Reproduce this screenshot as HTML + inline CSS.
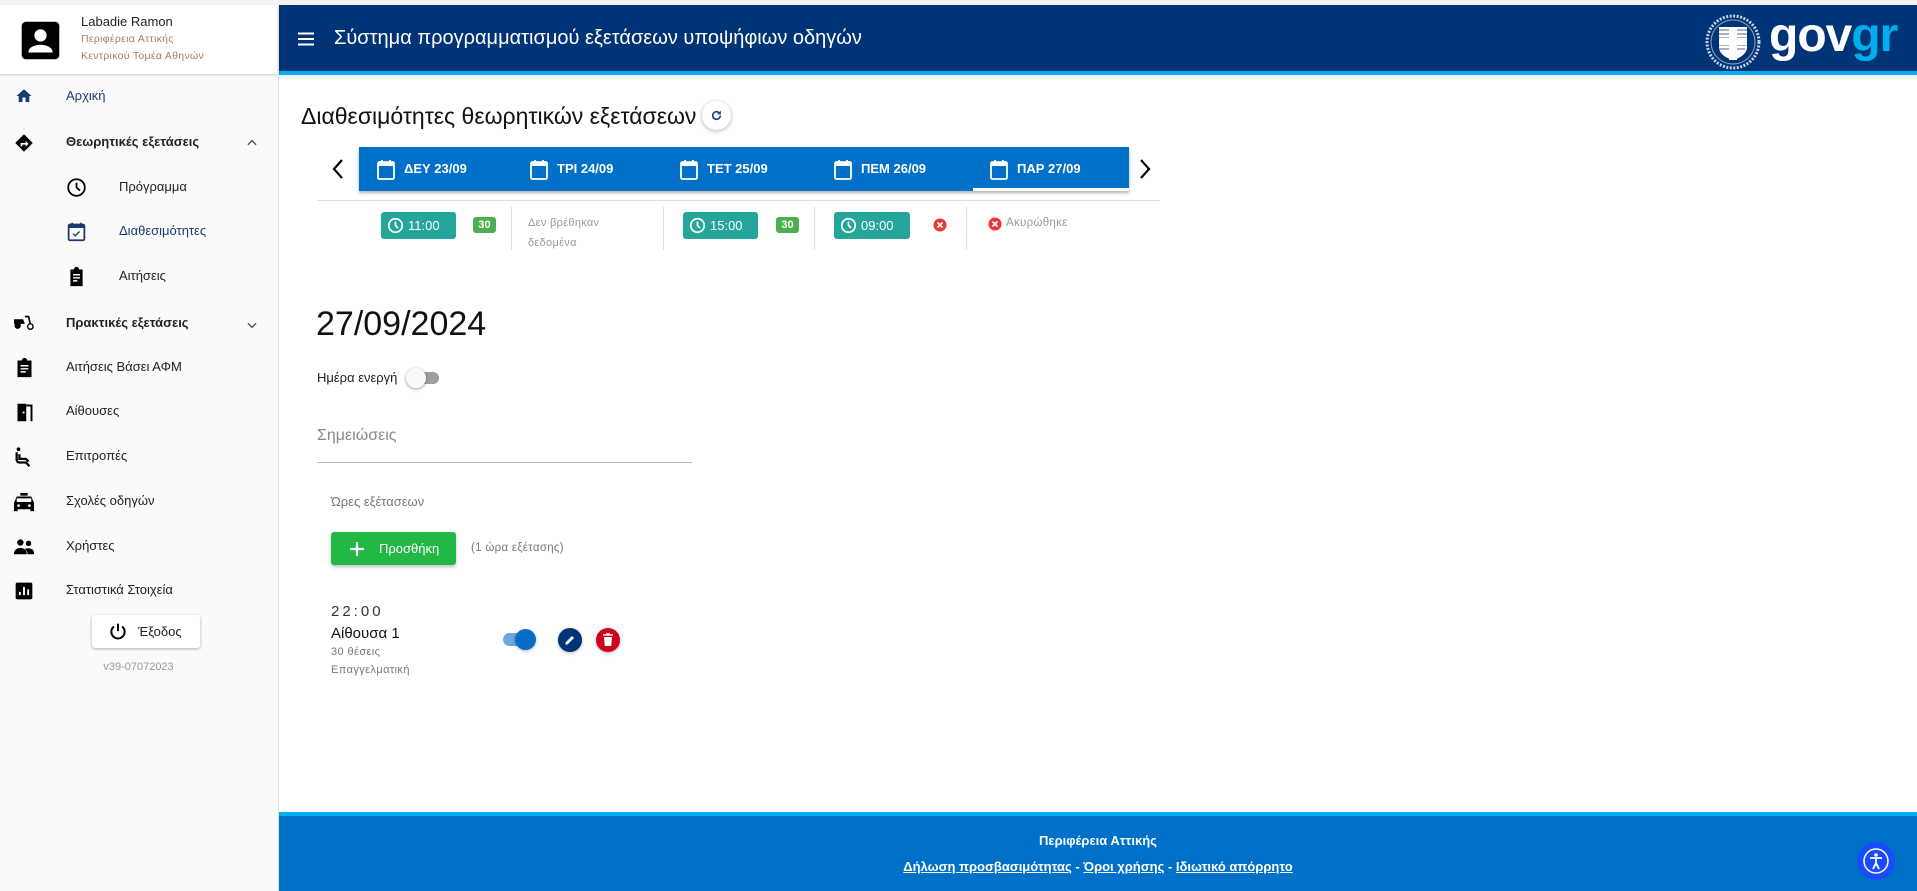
<!DOCTYPE html>
<html><head><meta charset="utf-8"><style>
*{box-sizing:border-box;margin:0;padding:0}
body{width:1917px;height:891px;overflow:hidden;background:#f3f3f4;font-family:"Liberation Sans",sans-serif;position:relative;color:#222}
.abs{position:absolute}
#side{position:absolute;left:0;top:5px;width:279px;height:886px;background:#fafafa;border-right:1px solid #e2e2e2}
#prof{position:absolute;left:0;top:0;width:277px;height:69px;background:#fff;box-shadow:0 1px 2px rgba(0,0,0,.2)}
.it{position:absolute;left:66px;font-size:13px;color:#222}
.ic{position:absolute}
#hdr{position:absolute;left:279px;top:5px;width:1638px;height:70px;background:#003476;border-bottom:4px solid #00aeef}
#main{position:absolute;left:279px;top:79px;width:1638px;height:733px;background:#fff}
#foot{position:absolute;left:279px;top:812px;width:1638px;height:79px;background:#0070c8;border-top:4px solid #00aeef;color:#fff;text-align:center}
.tab{position:absolute;top:0;height:44px;color:#fff;font-size:13px;font-weight:bold;line-height:44px}
.tab svg{position:absolute;left:0;top:12px}
.tab span{position:absolute;left:28px;white-space:nowrap}
.chip{position:absolute;top:212px;height:27px;background:#26a69a;border-radius:3px;color:#fff;font-size:13px;line-height:27px;padding-left:27px}
.chip svg{position:absolute;left:6px;top:5px}
.badge{position:absolute;top:217px;width:23px;height:16px;background:#4caf50;border-radius:3px;color:#fff;font-size:11px;line-height:16px;text-align:center;font-weight:bold}
.sep{position:absolute;top:207px;width:1px;height:43px;background:#ddd}
</style></head><body>
<div id="side">
 <div id="prof">
  <svg class="ic" style="left:20px;top:15px" width="41" height="41" viewBox="0 0 24 24"><rect x="1" y="1" width="22" height="22" rx="2.5" fill="#000"/><circle cx="12" cy="9" r="3.6" fill="#fff"/><path d="M5 18.5c0-2.8 4.5-4 7-4s7 1.2 7 4V19H5z" fill="#fff"/></svg>
  <div class="abs" style="left:81px;top:9px;font-size:13px;color:#222">Labadie Ramon</div>
  <div class="abs" style="left:81px;top:28px;font-size:10.5px;color:#a08060;letter-spacing:.3px">Περιφέρεια Αττικής</div>
  <div class="abs" style="left:81px;top:45px;font-size:10.5px;color:#a08060;letter-spacing:.3px">Κεντρικού Τομέα Αθηνών</div>
 </div>
 <svg class="ic" style="left:15px;top:82px" width="18" height="18" viewBox="0 0 24 24"><path d="M10 20v-6h4v6h5v-8h3L12 3 2 12h3v8z" fill="#1a3a6e"/></svg>
 <div class="it" style="top:83px;color:#1a3a6e">Αρχική</div>
 <svg class="ic" style="left:14px;top:128px" width="20" height="20" viewBox="0 0 24 24"><path d="M12 1.5 22.5 12 12 22.5 1.5 12z" fill="#000"/><path d="M8 16v-4h6v-2.5l3.5 3.5-3.5 3.5V14H10v2z" fill="#fff"/></svg>
 <div class="it" style="top:129px;font-weight:bold">Θεωρητικές εξετάσεις</div>
 <svg class="ic" style="left:245px;top:131px" width="14" height="14" viewBox="0 0 24 24"><path d="M5 15l7-7 7 7" stroke="#555" stroke-width="2.5" fill="none"/></svg>
 <svg class="ic" style="left:66px;top:172px" width="21" height="21" viewBox="0 0 24 24"><circle cx="12" cy="12" r="9.5" stroke="#000" stroke-width="2" fill="none"/><path d="M12 6.5V12l4 3.5" stroke="#000" stroke-width="2" fill="none"/></svg>
 <div class="it" style="left:119px;top:174px">Πρόγραμμα</div>
 <svg class="ic" style="left:66px;top:216px" width="21" height="21" viewBox="0 0 24 24"><rect x="3" y="4" width="18" height="18" rx="1.5" stroke="#1a3a6e" stroke-width="2" fill="none"/><rect x="3" y="4" width="18" height="4" fill="#1a3a6e"/><path d="M7 2v4M17 2v4" stroke="#1a3a6e" stroke-width="2"/><path d="M8 14.5l2.5 2.5 5-5" stroke="#1a3a6e" stroke-width="1.5" fill="none"/></svg>
 <div class="it" style="left:119px;top:218px;color:#1a3a6e">Διαθεσιμότητες</div>
 <svg class="ic" style="left:66px;top:261px" width="21" height="21" viewBox="0 0 24 24"><path d="M5 4h4a3 3 0 0 1 6 0h4v19H5z" fill="#000"/><path d="M8 10h8M8 13.5h8M8 17h5" stroke="#fff" stroke-width="1.6"/></svg>
 <div class="it" style="left:119px;top:263px">Αιτήσεις</div>
 <svg class="ic" style="left:13px;top:307px" width="22" height="20" viewBox="0 0 24 22"><path d="M1 8h10l2 5H1z" fill="#000"/><circle cx="5" cy="15" r="3.5" fill="#000"/><circle cx="19" cy="16" r="3" stroke="#000" stroke-width="1.6" fill="none"/><path d="M13 5h4l2 8" stroke="#000" stroke-width="1.8" fill="none"/></svg>
 <div class="it" style="top:310px;font-weight:bold">Πρακτικές εξετάσεις</div>
 <svg class="ic" style="left:245px;top:313px" width="14" height="14" viewBox="0 0 24 24"><path d="M5 9l7 7 7-7" stroke="#555" stroke-width="2.5" fill="none"/></svg>
 <svg class="ic" style="left:14px;top:352px" width="21" height="21" viewBox="0 0 24 24"><path d="M4 4h5a3 3 0 0 1 6 0h5v19H4z" fill="#000"/><path d="M7.5 10h9M7.5 13.5h9M7.5 17h6" stroke="#fff" stroke-width="1.6"/></svg>
 <div class="it" style="top:354px">Αιτήσεις Βάσει ΑΦΜ</div>
 <svg class="ic" style="left:14px;top:397px" width="21" height="21" viewBox="0 0 24 24"><path d="M3 22h11V2H4v20z" fill="#000"/><path d="M14 4h6v18" stroke="#000" stroke-width="2.2" fill="none"/><circle cx="11" cy="12" r="1.2" fill="#fff"/></svg>
 <div class="it" style="top:398px">Αίθουσες</div>
 <svg class="ic" style="left:13px;top:441px" width="22" height="22" viewBox="0 0 24 24"><circle cx="6" cy="3.5" r="2" fill="#000"/><path d="M4 7v8a3 3 0 0 0 3 3h7l4 4" stroke="#000" stroke-width="2.5" fill="none"/><path d="M7 9v5h7l3 3" stroke="#000" stroke-width="2.5" fill="none"/></svg>
 <div class="it" style="top:443px">Επιτροπές</div>
 <svg class="ic" style="left:13px;top:487px" width="22" height="20" viewBox="0 0 24 22"><path d="M8 1h8v3h-8z" fill="#000"/><path d="M4 5h16l3 7v9h-4v-2H5v2H1v-9z" fill="#000"/><rect x="4" y="7" width="16" height="4" fill="#fafafa"/><circle cx="6" cy="15" r="1.5" fill="#fafafa"/><circle cx="18" cy="15" r="1.5" fill="#fafafa"/></svg>
 <div class="it" style="top:488px">Σχολές οδηγών</div>
 <svg class="ic" style="left:13px;top:532px" width="22" height="20" viewBox="0 0 24 22"><circle cx="8" cy="6" r="3.5" fill="#000"/><circle cx="17" cy="7" r="3" fill="#000"/><path d="M1 18c0-4 4-6 7-6s7 2 7 6v1H1zM13 13c4-1.5 10 0 10 4v2h-7c0-2-1-4-3-6z" fill="#000"/></svg>
 <div class="it" style="top:533px">Χρήστες</div>
 <svg class="ic" style="left:14px;top:576px" width="20" height="20" viewBox="0 0 24 24"><rect x="2" y="2" width="20" height="20" rx="2" fill="#000"/><path d="M7 17v-4M12 17V7M17 17v-7" stroke="#fff" stroke-width="2.2"/></svg>
 <div class="it" style="top:577px">Στατιστικά Στοιχεία</div>
 <div class="abs" style="left:92px;top:610px;width:108px;height:33px;background:#fff;border-radius:3px;box-shadow:0 1px 3px rgba(0,0,0,.3)">
  <svg class="ic" style="left:16px;top:7px" width="20" height="20" viewBox="0 0 24 24"><path d="M12 2v9" stroke="#000" stroke-width="2.4"/><path d="M7 5.5a8 8 0 1 0 10 0" stroke="#000" stroke-width="2.4" fill="none"/></svg>
  <div class="abs" style="left:46px;top:9px;font-size:13px">Έξοδος</div>
 </div>
 <div class="abs" style="left:0;width:277px;top:656px;text-align:center;font-size:11px;color:#999">v39-07072023</div>
</div>

<div id="hdr">
 <svg class="ic" style="left:19px;top:27px" width="16" height="14" viewBox="0 0 16 14"><path d="M0 1.5h16M0 7h16M0 12.5h16" stroke="#fff" stroke-width="2"/></svg>
 <div class="abs" style="left:55px;top:22px;font-size:20px;color:#fff">Σύστημα προγραμματισμού εξετάσεων υποψήφιων οδηγών</div>
 <svg class="ic" style="left:1425px;top:8px" width="58" height="58" viewBox="0 0 58 58"><circle cx="29" cy="29" r="26" stroke="#c8d3e6" stroke-width="3" stroke-dasharray="2 1.5" fill="none"/><circle cx="29" cy="29" r="22" stroke="#8fa3c6" stroke-width="1" fill="none"/><path d="M15 14h28v20c0 7-7 11-14 13-7-2-14-6-14-13z" fill="#fff"/><path d="M15 17h28M15 21h28M15 25h28M15 32h28M15 36h26" stroke="#6e87b5" stroke-width="1.3"/><path d="M25 14h8v33h-8zM15 25h28v7H15z" fill="#fff"/></svg>
 <div class="abs" style="left:1490px;top:3px;font-size:48px;font-weight:bold;color:#fff;letter-spacing:-1px">gov<span style="color:#00aeef">gr</span></div>
</div>

<div id="main">
 <div class="abs" style="left:22px;top:24px;font-size:23px;color:#111">Διαθεσιμότητες θεωρητικών εξετάσεων</div>
 <div class="abs" style="left:423px;top:22px;width:29px;height:29px;border-radius:50%;background:#fff;box-shadow:0 1px 4px rgba(0,0,0,.3)">
  <svg class="ic" style="left:8px;top:8px" width="13" height="13" viewBox="0 0 24 24"><path d="M19 12a7 7 0 1 1-2.2-5.1" stroke="#1a3a8e" stroke-width="3" fill="none"/><path d="M20 3v7h-7z" fill="#1a3a8e"/></svg>
 </div>
 <svg class="ic" style="left:52px;top:79px" width="14" height="22" viewBox="0 0 14 22"><path d="M11 2 3 11l8 9" stroke="#000" stroke-width="2.2" fill="none"/></svg>
 <svg class="ic" style="left:859px;top:79px" width="14" height="22" viewBox="0 0 14 22"><path d="M3 2l8 9-8 9" stroke="#000" stroke-width="2.2" fill="none"/></svg>
 <div class="abs" style="left:80px;top:68px;width:770px;height:44px;background:#0070c8;box-shadow:0 2px 3px rgba(0,0,0,.3)">
  <div class="abs" style="left:614px;top:41px;width:156px;height:3px;background:#fff"></div>
  <div class="tab" style="left:17px"><svg width="20" height="22" viewBox="0 0 20 22"><rect x="2" y="3" width="16" height="17" rx="1.5" stroke="#fff" stroke-width="1.8" fill="none"/><rect x="2" y="3" width="16" height="4" fill="#fff"/><path d="M6 1v3M14 1v3" stroke="#fff" stroke-width="1.8"/></svg><span>ΔΕΥ 23/09</span></div>
  <div class="tab" style="left:170px"><svg width="20" height="22" viewBox="0 0 20 22"><rect x="2" y="3" width="16" height="17" rx="1.5" stroke="#fff" stroke-width="1.8" fill="none"/><rect x="2" y="3" width="16" height="4" fill="#fff"/><path d="M6 1v3M14 1v3" stroke="#fff" stroke-width="1.8"/></svg><span>ΤΡΙ 24/09</span></div>
  <div class="tab" style="left:320px"><svg width="20" height="22" viewBox="0 0 20 22"><rect x="2" y="3" width="16" height="17" rx="1.5" stroke="#fff" stroke-width="1.8" fill="none"/><rect x="2" y="3" width="16" height="4" fill="#fff"/><path d="M6 1v3M14 1v3" stroke="#fff" stroke-width="1.8"/></svg><span>ΤΕΤ 25/09</span></div>
  <div class="tab" style="left:474px"><svg width="20" height="22" viewBox="0 0 20 22"><rect x="2" y="3" width="16" height="17" rx="1.5" stroke="#fff" stroke-width="1.8" fill="none"/><rect x="2" y="3" width="16" height="4" fill="#fff"/><path d="M6 1v3M14 1v3" stroke="#fff" stroke-width="1.8"/></svg><span>ΠΕΜ 26/09</span></div>
  <div class="tab" style="left:630px"><svg width="20" height="22" viewBox="0 0 20 22"><rect x="2" y="3" width="16" height="17" rx="1.5" stroke="#fff" stroke-width="1.8" fill="none"/><rect x="2" y="3" width="16" height="4" fill="#fff"/><path d="M6 1v3M14 1v3" stroke="#fff" stroke-width="1.8"/></svg><span>ΠΑΡ 27/09</span></div>
 </div>
 <div class="abs" style="left:38px;top:121px;width:843px;height:1px;background:#ddd"></div>
</div>

<div class="chip" style="left:381px;width:75px"><svg width="17" height="17" viewBox="0 0 24 24"><circle cx="12" cy="12" r="9.5" stroke="#fff" stroke-width="2.4" fill="none"/><path d="M12 6.5V12l3.5 3.5" stroke="#fff" stroke-width="2.4" fill="none"/></svg>11:00</div>
<div class="badge" style="left:473px">30</div>
<div class="sep" style="left:511px"></div>
<div class="abs" style="left:528px;top:213px;font-size:11px;color:#999;line-height:20px;letter-spacing:.3px">Δεν βρέθηκαν<br>δεδομένα</div>
<div class="sep" style="left:663px"></div>
<div class="chip" style="left:683px;width:75px"><svg width="17" height="17" viewBox="0 0 24 24"><circle cx="12" cy="12" r="9.5" stroke="#fff" stroke-width="2.4" fill="none"/><path d="M12 6.5V12l3.5 3.5" stroke="#fff" stroke-width="2.4" fill="none"/></svg>15:00</div>
<div class="badge" style="left:776px">30</div>
<div class="sep" style="left:814px"></div>
<div class="chip" style="left:834px;width:76px"><svg width="17" height="17" viewBox="0 0 24 24"><circle cx="12" cy="12" r="9.5" stroke="#fff" stroke-width="2.4" fill="none"/><path d="M12 6.5V12l3.5 3.5" stroke="#fff" stroke-width="2.4" fill="none"/></svg>09:00</div>
<svg class="ic" style="left:933px;top:218px" width="14" height="14" viewBox="0 0 14 14"><circle cx="7" cy="7" r="6.5" fill="#e53935"/><path d="M4.5 4.5l5 5M9.5 4.5l-5 5" stroke="#fff" stroke-width="1.6"/></svg>
<div class="sep" style="left:966px"></div>
<svg class="ic" style="left:988px;top:217px" width="14" height="14" viewBox="0 0 14 14"><circle cx="7" cy="7" r="6.5" fill="#e53935"/><path d="M4.5 4.5l5 5M9.5 4.5l-5 5" stroke="#fff" stroke-width="1.6"/></svg>
<div class="abs" style="left:1006px;top:217px;font-size:11.5px;color:#999;letter-spacing:.3px">Ακυρώθηκε</div>

<div class="abs" style="left:316px;top:305px;font-size:34px;color:#111">27/09/2024</div>
<div class="abs" style="left:317px;top:370px;font-size:13px;color:#222">Ημέρα ενεργή</div>
<div class="abs" style="left:410px;top:372px;width:29px;height:12px;border-radius:6px;background:#9e9e9e"></div>
<div class="abs" style="left:406px;top:368px;width:20px;height:20px;border-radius:50%;background:#fafafa;box-shadow:0 1px 3px rgba(0,0,0,.4)"></div>
<div class="abs" style="left:317px;top:427px;font-size:16px;color:#888">Σημειώσεις</div>
<div class="abs" style="left:317px;top:462px;width:375px;height:1px;background:#bbb"></div>
<div class="abs" style="left:331px;top:494px;font-size:13px;color:#777">Ώρες εξέτασεων</div>
<div class="abs" style="left:331px;top:532px;width:125px;height:33px;background:#22b845;border-radius:3px;box-shadow:0 2px 3px rgba(0,0,0,.25);color:#fff;font-size:13px">
 <svg class="ic" style="left:18px;top:9px" width="16" height="16" viewBox="0 0 16 16"><path d="M8 1v14M1 8h14" stroke="#fff" stroke-width="2.2"/></svg>
 <div class="abs" style="left:48px;top:9px">Προσθήκη</div>
</div>
<div class="abs" style="left:471px;top:542px;font-size:11.5px;color:#777;letter-spacing:.3px">(1 ώρα εξέτασης)</div>
<div class="abs" style="left:331px;top:603px;font-size:15px;color:#333;letter-spacing:3px">22:00</div>
<div class="abs" style="left:331px;top:625px;font-size:15px;color:#111">Αίθουσα 1</div>
<div class="abs" style="left:331px;top:646px;font-size:11px;color:#777;letter-spacing:.4px">30 θέσεις</div>
<div class="abs" style="left:331px;top:664px;font-size:11px;color:#777;letter-spacing:.4px">Επαγγελματική</div>
<div class="abs" style="left:503px;top:633px;width:31px;height:13px;border-radius:7px;background:#6aa8e0"></div>
<div class="abs" style="left:515px;top:629px;width:21px;height:21px;border-radius:50%;background:#0a6cc7;box-shadow:0 1px 3px rgba(0,0,0,.3)"></div>
<div class="abs" style="left:558px;top:628px;width:24px;height:24px;border-radius:50%;background:#003476;box-shadow:0 1px 3px rgba(0,0,0,.3)"><svg class="ic" style="left:6px;top:6px" width="12" height="12" viewBox="0 0 24 24"><path d="M3 21v-4L16 4l4 4L7 21z" fill="#fff"/></svg></div>
<div class="abs" style="left:596px;top:628px;width:24px;height:24px;border-radius:50%;background:#d0021b;box-shadow:0 1px 3px rgba(0,0,0,.3)"><svg class="ic" style="left:6px;top:5px" width="12" height="14" viewBox="0 0 12 14"><path d="M1 2h10M4 1h4" stroke="#fff" stroke-width="1.6"/><path d="M2 4h8l-.7 9H2.7z" fill="#fff"/></svg></div>

<div id="foot">
 <div class="abs" style="left:0;width:1638px;top:17px;font-size:13px;font-weight:bold">Περιφέρεια Αττικής</div>
 <div class="abs" style="left:0;width:1638px;top:43px;font-size:13px;font-weight:bold"><u>Δήλωση προσβασιμότητας</u> - <u>Όροι χρήσης</u> - <u>Ιδιωτικό απόρρητο</u></div>
 <div class="abs" style="left:1578px;top:26px;width:38px;height:38px;border-radius:50%;background:#1a4bff">
  <svg class="ic" style="left:5px;top:5px" width="28" height="28" viewBox="0 0 28 28"><circle cx="14" cy="14" r="12" stroke="#fff" stroke-width="1.5" fill="none"/><circle cx="14" cy="8" r="1.8" fill="#fff"/><path d="M8 11h12M14 11v5l-3 6M14 16l3 6" stroke="#fff" stroke-width="1.8" fill="none"/></svg>
 </div>
</div>
</body></html>
